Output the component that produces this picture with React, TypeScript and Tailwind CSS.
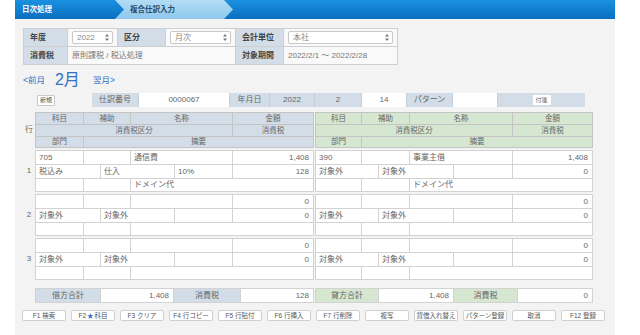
import React from "react";

type Side = {
  head: string;
  h1: string[];
  h2: string[];
  h3: string[];
  l1: string[];
  l2: string[];
  l3: string[];
  tot: string[];
  totals: string[];
  entries: string[][][];
};

const left: Side = {
  head: "bg-[#d3dde8]",
  h1: ["w-[48px]", "w-[47px]", "w-[102px]", "w-[81px]"],
  h2: ["w-[197px]", "w-[81px]"],
  h3: ["w-[48px]", "w-[230px]"],
  l1: ["w-[48px]", "w-[47px]", "w-[102px]", "w-[81px]"],
  l2: ["w-[65px]", "w-[74px]", "w-[58px]", "w-[81px]"],
  l3: ["w-[48px]", "w-[47px]", "w-[183px]"],
  tot: ["w-[65px]", "w-[73px]", "w-[67px]", "w-[73px]"],
  totals: ["借方合計", "1,408", "消費税", "128"],
  entries: [
    [["705", "", "通信費", "1,408"], ["税込み", "仕入", "10%", "128"], ["", "", "ドメイン代"]],
    [["", "", "", "0"], ["対象外", "対象外", "", "0"], ["", "", ""]],
    [["", "", "", "0"], ["対象外", "対象外", "", "0"], ["", "", ""]],
  ],
};

const right: Side = {
  head: "bg-[#d5e7d0]",
  h1: ["w-[46px]", "w-[48px]", "w-[103px]", "w-[80px]"],
  h2: ["w-[197px]", "w-[80px]"],
  h3: ["w-[46px]", "w-[231px]"],
  l1: ["w-[46px]", "w-[48px]", "w-[103px]", "w-[80px]"],
  l2: ["w-[63px]", "w-[75px]", "w-[59px]", "w-[80px]"],
  l3: ["w-[46px]", "w-[48px]", "w-[183px]"],
  tot: ["w-[63px]", "w-[75px]", "w-[64px]", "w-[75px]"],
  totals: ["貸方合計", "1,408", "消費税", "0"],
  entries: [
    [["390", "", "事業主借", "1,408"], ["対象外", "対象外", "", "0"], ["", "", "ドメイン代"]],
    [["", "", "", "0"], ["対象外", "対象外", "", "0"], ["", "", ""]],
    [["", "", "", "0"], ["対象外", "対象外", "", "0"], ["", "", ""]],
  ],
};

const fnKeys = ["F1 検索", "F2 ★科目", "F3 クリア", "F4 行コピー", "F5 行貼付", "F6 行挿入", "F7 行削除", "複写", "貸借入れ替え", "パターン登録", "取消", "F12 登録"];

function Select({ text }: { text: string }) {
  return (
    <div className="flex h-[13px] w-full items-center justify-between rounded-[2px] border border-[#c9c9c9] bg-white pl-[4px] pr-[3px] text-[#888]">
      <span>{text}</span>
      <svg width="4" height="7" viewBox="0 0 4 7" className="fill-[#777]">
        <path d="M2 0 L4 2.6 H0 Z M2 7 L4 4.4 H0 Z" />
      </svg>
    </div>
  );
}

function HeaderTable() {
  const lab = "flex items-center border-r border-b border-[#cfcfcf] bg-[#d3dde8] pl-[6px] font-bold text-[#444]";
  const val = "flex items-center border-r border-b border-[#cfcfcf] bg-[#f9f9f9] px-[4px]";
  return (
    <div className="w-[375px] border-l border-t border-[#cfcfcf]">
      <div className="flex h-[18px]">
        <div className={`${lab} w-[44px]`}>年度</div>
        <div className={`${val} w-[50px]`}><Select text="2022" /></div>
        <div className={`${lab} w-[48px]`}>区分</div>
        <div className={`${val} w-[70px]`}><Select text="月次" /></div>
        <div className={`${lab} w-[48px]`}>会計単位</div>
        <div className={`${val} w-[114px]`}><Select text="本社" /></div>
      </div>
      <div className="flex h-[18px]">
        <div className={`${lab} w-[44px]`}>消費税</div>
        <div className={`${val} w-[168px] text-[#777]`}>原則課税 / 税込処理</div>
        <div className={`${lab} w-[48px]`}>対象期間</div>
        <div className={`${val} w-[114px] text-[#777]`}>2022/2/1 ～ 2022/2/28</div>
      </div>
    </div>
  );
}

function EntryHeader() {
  const lab = "flex items-center justify-center border-r border-[#c5cfd9] bg-[#d3dde8]";
  const box = "flex items-center justify-center border-r border-[#c5cfd9] bg-white";
  return (
    <div className="mt-[4px] flex h-[14px] items-center">
      <div className="ml-[14px] flex h-[11px] w-[18px] items-center justify-center rounded-[1px] border border-[#c9c9c9] bg-white text-[6px]">新規</div>
      <div className="ml-[37px] flex h-[14px] text-[#666]">
        <div className={`${lab} w-[47px]`}>仕訳番号</div>
        <div className={`${box} w-[91px]`}>0000067</div>
        <div className={`${lab} w-[40px]`}>年月日</div>
        <div className={`${lab} w-[45px]`}>2022</div>
        <div className={`${lab} w-[47px]`}>2</div>
        <div className={`${box} w-[45px]`}>14</div>
        <div className={`${lab} w-[46px]`}>パターン</div>
        <div className={`${box} w-[45px]`}></div>
        <div className={`${lab} w-[87px] border-r-0`}>
          <div className="flex h-[10px] w-[18px] items-center justify-center bg-white text-[6px]">付箋</div>
        </div>
      </div>
    </div>
  );
}

function HeadRow({ cols, vals, head, h }: { cols: string[]; vals: string[]; head: string; h: string }) {
  return (
    <div className={`flex ${h}`}>
      {cols.map((w, i) => (
        <div key={i} className={`${w} ${head} flex shrink-0 items-center justify-center border-r border-b border-[#c4c4c4] text-[7.5px] text-[#666]`}>
          {vals[i]}
        </div>
      ))}
    </div>
  );
}

function Line({ cols, vals, h }: { cols: string[]; vals: string[]; h: string }) {
  return (
    <div className={`flex ${h}`}>
      {cols.map((w, i) => (
        <div
          key={i}
          className={`${w} flex shrink-0 items-center border-r border-b border-[#d2d2d2] bg-white px-[3px] ${i === 3 ? "justify-end pr-[4px]" : ""}`}
        >
          {vals[i]}
        </div>
      ))}
    </div>
  );
}

function SideHead({ s }: { s: Side }) {
  return (
    <div className="border-l border-t border-[#c4c4c4]">
      <HeadRow cols={s.h1} head={s.head} h="h-[12px]" vals={["科目", "補助", "名称", "金額"]} />
      <HeadRow cols={s.h2} head={s.head} h="h-[12px]" vals={["消費税区分", "消費税"]} />
      <HeadRow cols={s.h3} head={s.head} h="h-[11px]" vals={["部門", "摘要"]} />
    </div>
  );
}

function SideEntry({ s, e }: { s: Side; e: string[][] }) {
  return (
    <div className="border-l border-t border-[#d2d2d2]">
      <Line cols={s.l1} vals={e[0]} h="h-[14px]" />
      <Line cols={s.l2} vals={e[1]} h="h-[14px]" />
      <Line cols={s.l3} vals={e[2]} h="h-[13px]" />
    </div>
  );
}

function Journal() {
  return (
    <div className="mt-[5px] flex flex-col gap-[2px] text-[#666]">
      <div className="flex">
        <div className="flex w-[12px] items-center justify-center text-[8px]">行</div>
        <SideHead s={left} />
        <div className="ml-[1px]">
          <SideHead s={right} />
        </div>
      </div>
      {[0, 1, 2].map((n) => (
        <div key={n} className="flex">
          <div className="flex w-[12px] items-center justify-center">{n + 1}</div>
          <SideEntry s={left} e={left.entries[n]} />
          <div className="ml-[1px]">
            <SideEntry s={right} e={right.entries[n]} />
          </div>
        </div>
      ))}
    </div>
  );
}

function TotalSide({ s }: { s: Side }) {
  return (
    <div className="flex h-[15px] border-l border-t border-[#d2d2d2]">
      {s.tot.map((w, i) => (
        <div
          key={i}
          className={`${w} flex shrink-0 items-center border-r border-b border-[#d2d2d2] ${
            i % 2 === 0 ? `${s.head} justify-center` : "justify-end bg-white pr-[4px]"
          }`}
        >
          {s.totals[i]}
        </div>
      ))}
    </div>
  );
}

export default function App() {
  return (
    <div className="h-[335px] w-[640px] overflow-hidden bg-white font-['Liberation_Sans','Noto_Sans_CJK_JP',sans-serif] text-[8px] text-[#555]">
      <div className="ml-[15px] w-[600px]">
        <div className="flex h-[19px] bg-gradient-to-b from-[#1a91e1] to-[#0a6ebf] text-[7.5px] font-bold">
          <div className="flex w-[100px] items-center pl-[7px] text-white">日次処理</div>
          <div className="flex w-[118px] items-center bg-gradient-to-b from-[#b3dcf5] to-[#8dc7ec] pl-[15px] text-[#2b4c6d] [clip-path:polygon(0_0,calc(100%_-_9px)_0,100%_50%,calc(100%_-_9px)_100%,0_100%,9px_50%)]">
            複合仕訳入力
          </div>
        </div>
        <div className="h-[316px] bg-[#f3f3f3] pl-[8px] pt-[9px]">
          <HeaderTable />
          <div className="mt-[6px] flex h-[18px] items-center text-[#2d72c4]">
            <span className="text-[8.5px]">&lt;前月</span>
            <span className="ml-[10px] text-[16px] leading-none">2月</span>
            <span className="ml-[13px] text-[8.5px]">翌月&gt;</span>
          </div>
          <EntryHeader />
          <Journal />
          <div className="mt-[8px] ml-[12px] flex gap-[1px] text-[#666]">
            <TotalSide s={left} />
            <TotalSide s={right} />
          </div>
          <div className="mt-[7px] -ml-[1px] grid w-[583px] grid-cols-12 gap-[5px]">
            {fnKeys.map((k) => (
              <div key={k} className="flex h-[11px] items-center justify-center rounded-[2px] border border-[#cfcfcf] bg-white text-[6.5px] text-[#555]">
                {k.includes("★") ? (
                  <>
                    F2 <span className="mx-[1px] text-[#2f6fc4]">★</span>科目
                  </>
                ) : (
                  k
                )}
              </div>
            ))}
          </div>
        </div>
      </div>
    </div>
  );
}
